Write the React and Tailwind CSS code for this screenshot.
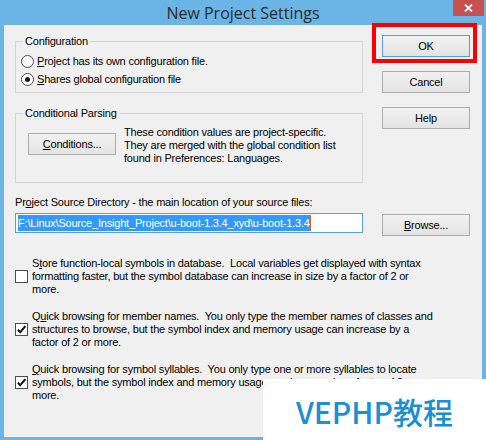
import React from 'react';

// Petits contrôles façon Windows 8
const Button = ({ children, focused = false, className = '' }) => (
  <div
    className={`w-[88px] h-[22px] flex items-center justify-center border bg-linear-to-b from-[#f2f2f2] to-[#e3e3e3] ${
      focused ? 'border-[#569de5]' : 'border-[#acacac]'
    } ${className}`}
  >
    {children}
  </div>
);

const Radio = ({ checked }) => (
  <div className="w-[13px] h-[13px] rounded-full border border-[#4d4d4d] bg-white flex items-center justify-center shrink-0">
    {checked && <div className="w-[5px] h-[5px] rounded-full bg-[#1a1a1a]" />}
  </div>
);

const Checkbox = ({ checked }) => (
  <div className="w-[13px] h-[13px] border border-[#4d4d4d] bg-white flex items-center justify-center shrink-0">
    {checked && (
      <svg width="11" height="11" viewBox="0 0 11 11">
        <path d="M1.8 5.6 L4.2 8.2 L9.4 2.2" fill="none" stroke="#111" strokeWidth="2" />
      </svg>
    )}
  </div>
);

const options = [
  {
    checked: false,
    lines: [
      <>S<u>t</u>ore function-local symbols in database.  Local variables get displayed with syntax</>,
      'formatting faster, but the symbol database can increase in size by a factor of 2 or',
      'more.',
    ],
  },
  {
    checked: true,
    lines: [
      <>Q<u>u</u>ick browsing for member names.  You only type the member names of classes and</>,
      'structures to browse, but the symbol index and memory usage can increase by a',
      'factor of 2 or more.',
    ],
  },
  {
    checked: true,
    lines: [
      <><u>Q</u>uick browsing for symbol syllables.  You only type one or more syllables to locate</>,
      'symbols, but the symbol index and memory usage can increase by a factor of 2 or',
      'more.',
    ],
  },
];

export default function App() {
  return (
    <div className="relative w-[486px] h-[440px] bg-[#6ab4e6] flex flex-col overflow-hidden font-['Liberation_Sans',Arial,sans-serif] text-[11px] leading-[13px] tracking-[-0.2px] text-black">
      {/* Barre de titre */}
      <div className="relative h-[25px] shrink-0 flex items-center justify-center">
        <span className="font-['Open_Sans','Noto_Sans',sans-serif] text-[16px] tracking-normal text-[#2b2b2b] leading-none">
          New Project Settings
        </span>
        <div className="absolute right-[2px] top-0 w-[31px] h-[16px] bg-[#c75050] flex items-center justify-center">
          <svg width="9" height="8" viewBox="0 0 9 8">
            <path d="M1 0.5 L8 7.5 M8 0.5 L1 7.5" stroke="#fff" strokeWidth="1.8" />
          </svg>
        </div>
      </div>

      {/* Corps du dialogue */}
      <div className="flex-1 ml-[4px] mr-[4px] mb-[3px] bg-[#f0f0f0] pl-[11px] pr-[12px] flex flex-col">
        <div className="flex">
          <div className="w-[348px]">
            <fieldset className="mt-[10px] border border-[#d5d5d5] px-[5px] pb-[4px]">
              <legend className="ml-[2px] px-[2px] leading-[13px]">Configuration</legend>
              <div className="mt-[4px]">
                <div className="h-[18px] flex items-center gap-[3px]">
                  <Radio checked={false} />
                  <span>
                    <u>P</u>roject has its own configuration file.
                  </span>
                </div>
                <div className="h-[18px] flex items-center gap-[3px]">
                  <Radio checked />
                  <span>
                    <u>S</u>hares global configuration file
                  </span>
                </div>
              </div>
            </fieldset>

            <fieldset className="mt-[14px] border border-[#d5d5d5] px-[5px] pb-[17px]">
              <legend className="ml-[2px] px-[2px] leading-[13px]">Conditional Parsing</legend>
              <div className="mt-[6px] pl-[7px] flex items-start gap-[8px]">
                <Button className="mt-[7px] shrink-0">
                  <span>
                    <u>C</u>onditions...
                  </span>
                </Button>
                <div>
                  <div>These condition values are project-specific.</div>
                  <div>They are merged with the global condition list</div>
                  <div>found in Preferences: Languages.</div>
                </div>
              </div>
            </fieldset>
          </div>

          <div className="ml-auto mt-[10px] flex flex-col gap-[14px]">
            <Button focused>OK</Button>
            <Button>Cancel</Button>
            <Button>Help</Button>
          </div>
        </div>

        <div className="mt-[13px]">
          Pr<u>o</u>ject Source Directory - the main location of your source files:
        </div>
        <div className="mt-[4px] flex items-start">
          <div className="w-[348px] h-[20px] border border-[#569de5] bg-white pl-[2px] flex items-center">
            <span className="h-[16px] bg-[#3399ff] text-white flex items-center whitespace-pre">
              F:\Linux\Source_Insight_Project\u-boot-1.3.4_xyd\u-boot-1.3.4
            </span>
            <span className="w-[1px] h-[16px] bg-[#d2691e]" />
          </div>
          <Button className="ml-auto mt-[1px]">
            <span>
              <u>B</u>rowse...
            </span>
          </Button>
        </div>

        <div className="mt-[21px] flex flex-col gap-[14px]">
          {options.map((opt, i) => (
            <div key={i} className="flex items-center gap-[4px]">
              <Checkbox checked={opt.checked} />
              <div>
                {opt.lines.map((line, j) => (
                  <div key={j} className="whitespace-pre">
                    {line}
                  </div>
                ))}
              </div>
            </div>
          ))}
        </div>
      </div>

      {/* Cadre rouge autour du bouton OK */}
      <div className="absolute left-[372px] top-[23px] w-[105px] h-[40px] border-[4px] border-[#ff0000]" />

      {/* Filigrane */}
      <div className="absolute left-[263px] top-[379px] right-0 bottom-0 bg-white flex items-center justify-center pt-[2px]">
        <span className="font-['Noto_Sans_CJK_SC',sans-serif] font-medium text-[30px] tracking-normal leading-none text-[#1b8fd3]">
          VEPHP教程
        </span>
      </div>
    </div>
  );
}
